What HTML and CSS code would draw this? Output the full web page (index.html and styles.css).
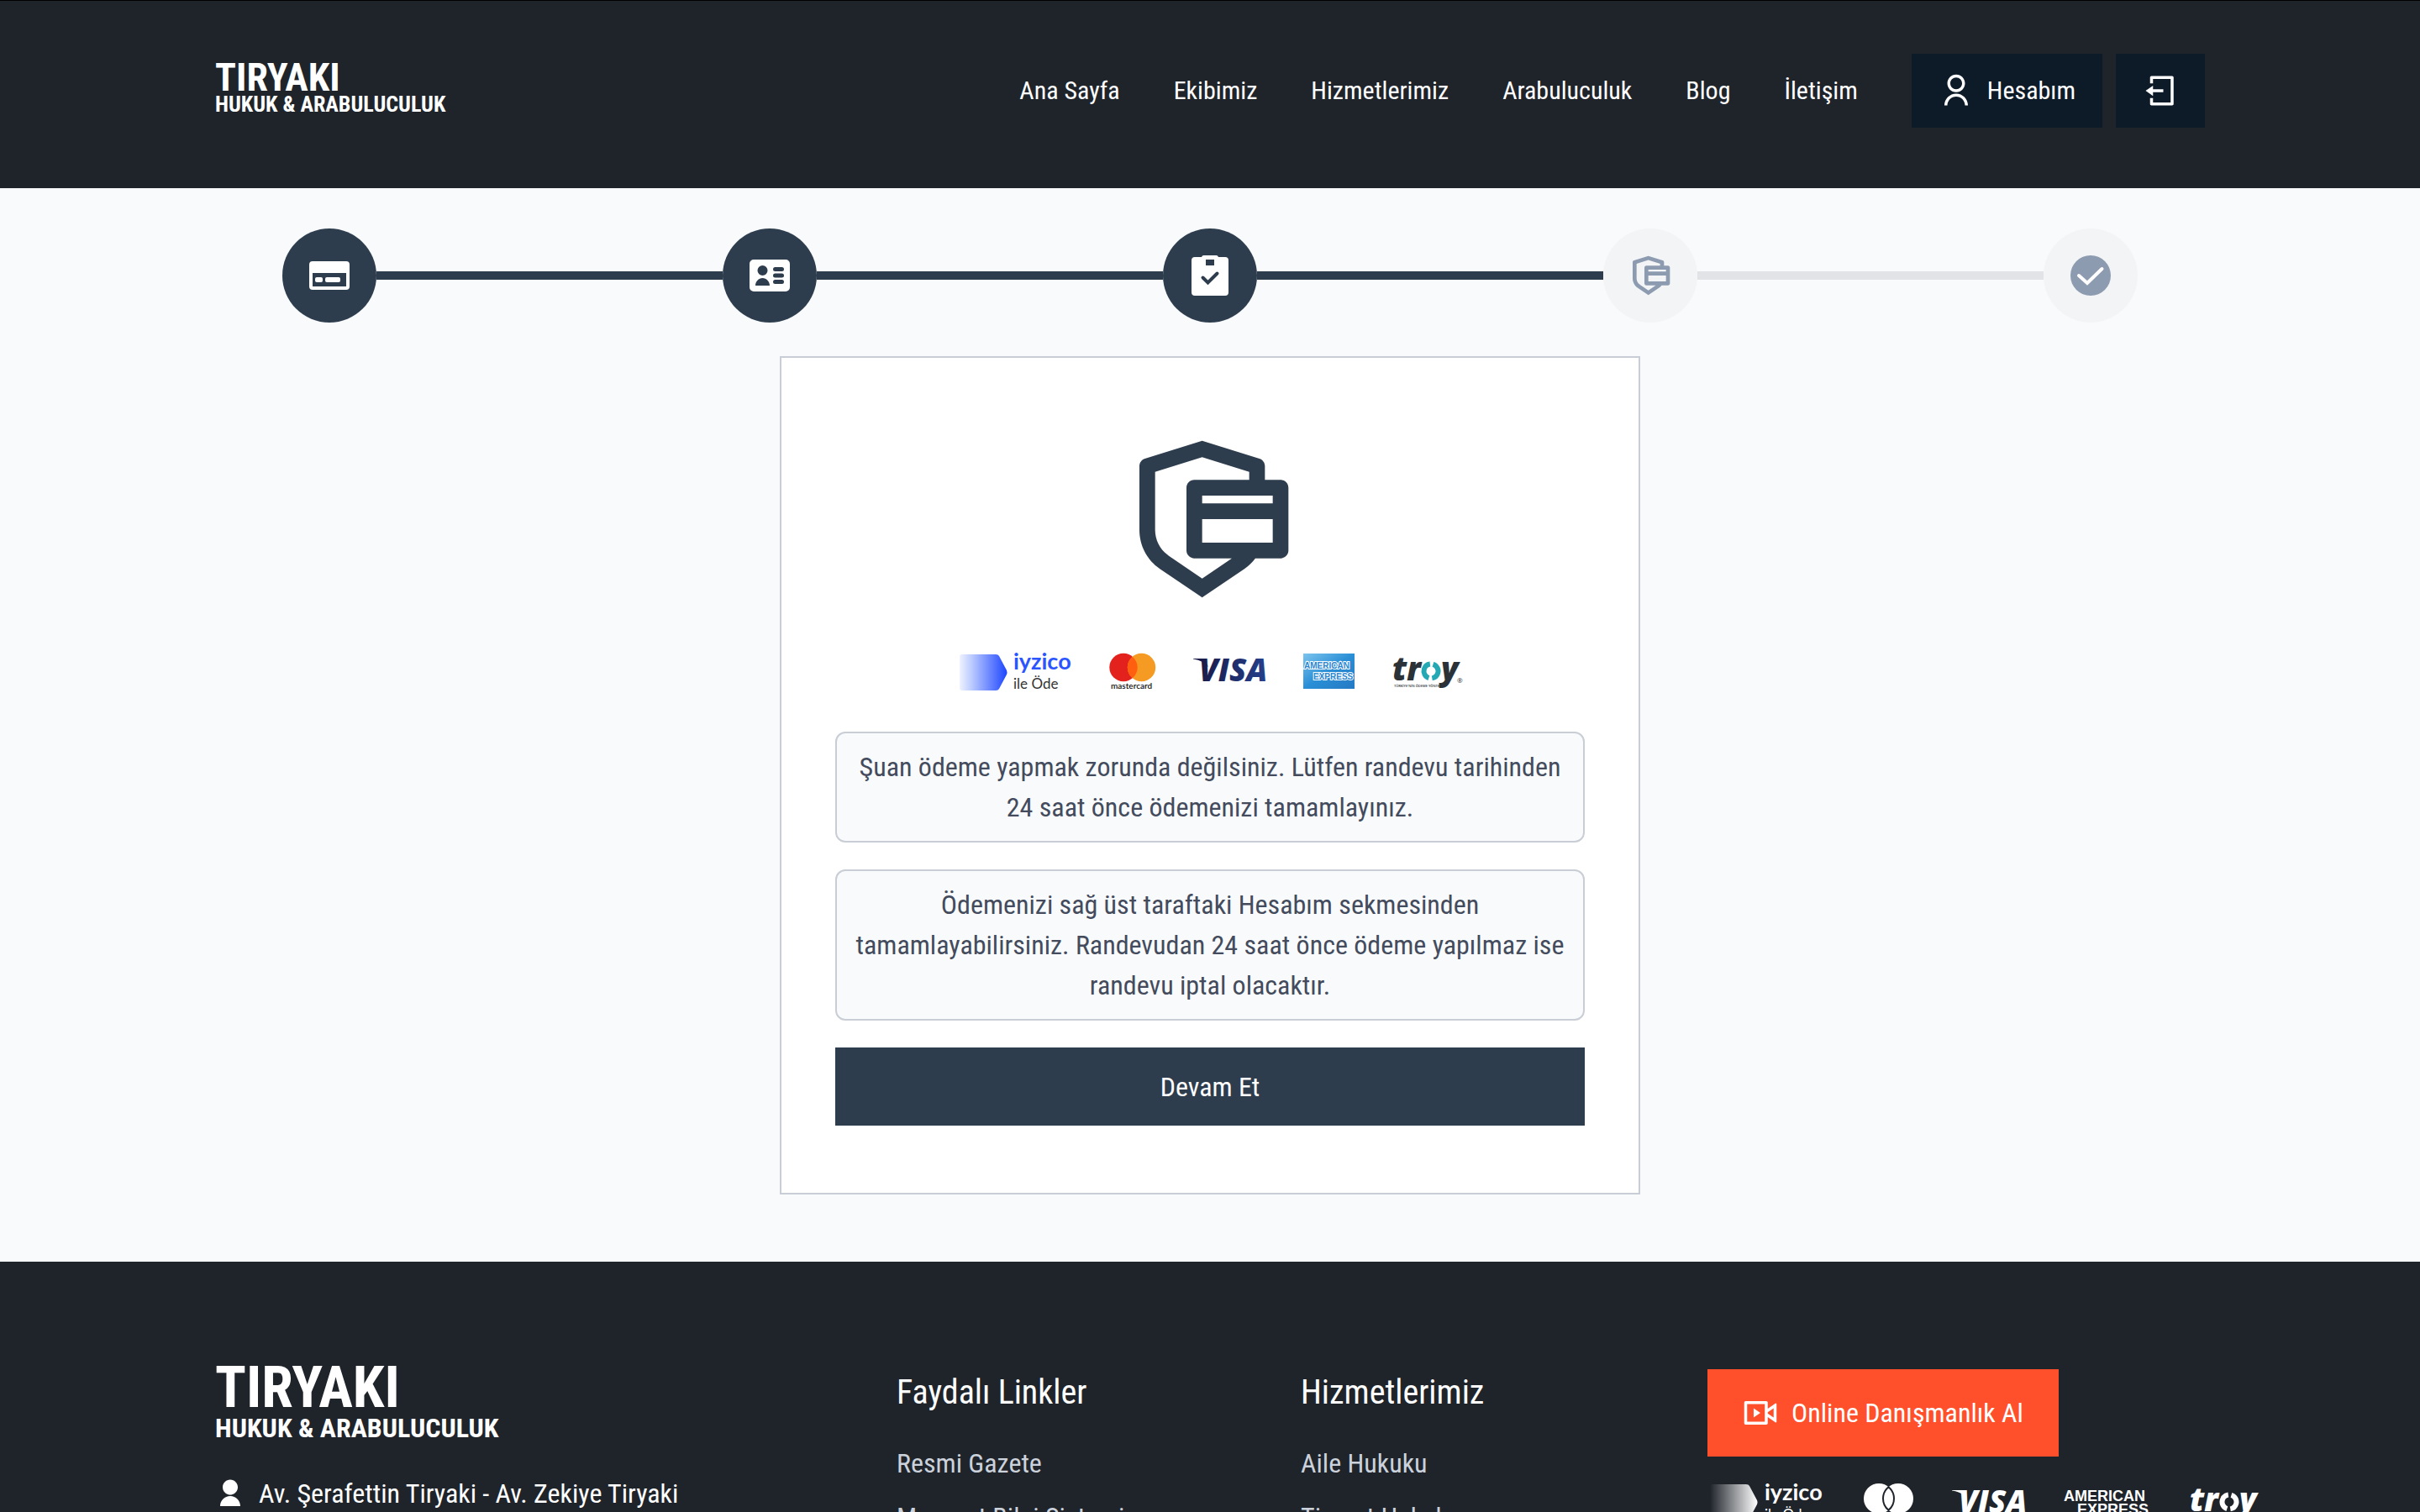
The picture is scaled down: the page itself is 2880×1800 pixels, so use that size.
FILE: index.html
```html
<!DOCTYPE html>
<html lang="tr">
<head>
<meta charset="utf-8">
<meta name="viewport" content="width=device-width, initial-scale=1">
<title>Tiryaki Hukuk &amp; Arabuluculuk</title>
<link rel="stylesheet" href="styles.css">
</head>
<body>
<div class="page">
  <header class="header">
    <div class="container header-inner">
      <a class="logo" href="#">
        <span class="logo-name">TIRYAKI</span>
        <span class="logo-sub">HUKUK &amp; ARABULUCULUK</span>
      </a>
      <nav class="nav">
        <a href="#">Ana Sayfa</a>
        <a href="#">Ekibimiz</a>
        <a href="#">Hizmetlerimiz</a>
        <a href="#">Arabuluculuk</a>
        <a href="#">Blog</a>
        <a href="#">İletişim</a>
        <div class="account">
          <button class="account-button" type="button">
            <svg class="icon" viewBox="0 0 24 24" aria-hidden="true"><path d="M4 22C4 17.582 7.582 14 12 14S20 17.582 20 22H18C18 18.686 15.314 16 12 16S6 18.686 6 22H4ZM12 13C8.685 13 6 10.315 6 7S8.685 1 12 1S18 3.685 18 7S15.315 13 12 13ZM12 11C14.21 11 16 9.21 16 7S14.21 3 12 3S8 4.79 8 7S9.79 11 12 11Z"/></svg>
            Hesabım
          </button>
          <button class="account-button" type="button" aria-label="Çıkış">
            <svg class="icon" viewBox="-1 0 24 24" aria-hidden="true"><path d="M4 17H6V20H18V4H6V7H4V3C4 2.45 4.45 2 5 2H19C19.55 2 20 2.45 20 3V21C20 21.55 19.55 22 19 22H5C4.45 22 4 21.55 4 21V17ZM6 11H13V13H6V15.5L1 12L6 8.500V11Z"/></svg>
          </button>
        </div>
      </nav>
    </div>
  </header>

  <main class="main">
    <ol class="steps">
      <li class="step done">
        <svg class="step-icon" viewBox="0 0 48 48" aria-label="Ödeme türü"><path fill-rule="evenodd" d="M4 7H44a4 4 0 0 1 4 4V37a4 4 0 0 1-4 4H4a4 4 0 0 1-4-4V11a4 4 0 0 1 4-4ZM4 21V37H44V21Z"/><rect x="7" y="26" width="9" height="6" rx="2"/><rect x="19" y="26" width="18" height="6" rx="2"/></svg>
      </li>
      <li class="bar done"></li>
      <li class="step done">
        <svg class="step-icon" viewBox="0 0 48 48" aria-label="Bilgiler"><path fill-rule="evenodd" d="M5 5H43a5 5 0 0 1 5 5V38a5 5 0 0 1-5 5H5a5 5 0 0 1-5-5V10a5 5 0 0 1 5-5ZM15.500 12a6 6 0 1 0 0 12a6 6 0 0 0 0-12ZM7 36H24C24 31 20 27 15.500 27S7 31 7 36ZM30.500 14a2 2 0 0 0 0 5H38.500a2 2 0 0 0 0-5ZM30.500 21.500a2 2 0 0 0 0 5H38.500a2 2 0 0 0 0-5ZM30.500 29a2 2 0 0 0 0 5H38.500a2 2 0 0 0 0-5Z"/></svg>
      </li>
      <li class="bar done"></li>
      <li class="step done">
        <svg class="step-icon" viewBox="0 0 48 48" aria-label="Onay"><path fill-rule="evenodd" d="M6 2H14a3 3 0 0 1 3-2H31a3 3 0 0 1 3 2H42a4 4 0 0 1 4 4V44a4 4 0 0 1-4 4H6a4 4 0 0 1-4-4V6a4 4 0 0 1 4-4ZM19 5V12H29V5Z"/><path class="mark" d="M15.500 26.500L21.500 32.500L32.500 21.500"/></svg>
      </li>
      <li class="bar done"></li>
      <li class="step">
        <svg class="step-icon large" viewBox="0 0 24 24" aria-label="Güvenli ödeme"><use href="#secure-card"/></svg>
      </li>
      <li class="bar"></li>
      <li class="step">
        <svg class="step-icon" viewBox="0 0 48 48" aria-label="Tamamlandı"><circle cx="24" cy="24" r="24"/><path class="tick" d="M10 24L20 33L37.500 16"/></svg>
      </li>
    </ol>

    <section class="card">
      <svg class="secure" viewBox="0 0 24 24" aria-hidden="true">
        <path id="secure-card" fill-rule="evenodd" d="M11 2L18.298 4.281C18.715 4.411 19 4.798 19 5.235V7H21C21.552 7 22 7.448 22 8V16C22 16.552 21.552 17 21 17H17.780C17.390 17.510 16.920 17.970 16.390 18.340L11 22L5.610 18.340C3.970 17.230 3 15.370 3 13.370V5.235C3 4.798 3.285 4.411 3.702 4.281L11 2ZM11 4.094L5 5.970V13.370C5 14.620 5.580 15.790 6.560 16.540L6.750 16.680L11 19.580L14.780 17H10C9.448 17 9 16.552 9 16V8C9 7.448 9.448 7 10 7H17V5.970L11 4.094ZM11 12V15H20V12H11ZM11 9V10H20V9H11Z"/>
      </svg>

      <svg class="payments" viewBox="0 0 604 48" role="img" aria-label="Ödeme yöntemleri">
        <defs>
          <linearGradient id="iyzico-fill"><stop offset="0" stop-color="#eef2ff"/><stop offset=".25" stop-color="#bccbff"/><stop offset="1" stop-color="#1e46ff"/></linearGradient>
          <linearGradient id="visa-fill"><stop offset="0" stop-color="#1a1a48"/><stop offset="1" stop-color="#25408c"/></linearGradient>
          <linearGradient id="amex-fill" x2="1" y2="1"><stop offset="0" stop-color="#7cc4ee"/><stop offset=".5" stop-color="#2a8fd6"/><stop offset="1" stop-color="#2579c4"/></linearGradient>
        </defs>
        <path fill="url(#iyzico-fill)" d="M7 3H47Q50 3 51 5L60 22Q61 24.500 60 27L51 44Q50 46 47 46H7Q4 46 4 43V6Q4 3 7 3Z"/>
        <text class="iyzico" x="68" y="21">iyzico</text>
        <text class="ode" x="68" y="44">ile Öde</text>
        <circle cx="199" cy="18.500" r="16.700" fill="#e3211d"/>
        <circle cx="220.500" cy="18.500" r="16.700" fill="#f59a22"/>
        <path fill="#ff5f0f" d="M209.750 5.720a16.700 16.700 0 0 1 0 25.560a16.700 16.700 0 0 1 0-25.560Z"/>
        <text class="mastercard" x="184" y="44">mastercard</text>
        <path fill="#1a1a48" d="M282 8H295L300 18Q294 10 282 8.500Z"/>
        <text class="visa" x="289" y="35" fill="url(#visa-fill)">VISA</text>
        <rect x="413" y="2" width="61" height="42" fill="url(#amex-fill)"/>
        <text class="amex" x="414" y="20">AMERICAN</text>
        <text class="amex" x="425" y="33">EXPRESS</text>
        <text class="troy" x="519" y="34">tr</text>
        <circle class="ring" cx="565" cy="23" r="8.500" transform="rotate(-73 565 23)"/>
        <text class="troy" x="577" y="34">y</text>
        <text class="troy-note" x="521" y="42">TÜRKİYE'NİN ÖDEME YÖNTEMİ</text>
        <text class="reg" x="596" y="37">®</text>
      </svg>

      <p class="note">Şuan ödeme yapmak zorunda değilsiniz. Lütfen randevu tarihinden 24 saat önce ödemenizi tamamlayınız.</p>
      <p class="note">Ödemenizi sağ üst taraftaki Hesabım sekmesinden tamamlayabilirsiniz. Randevudan 24 saat önce ödeme yapılmaz ise randevu iptal olacaktır.</p>
      <button class="continue" type="button">Devam Et</button>
    </section>
  </main>

  <footer class="footer">
    <div class="container footer-inner">
      <div>
        <a class="logo footer-logo" href="#">
          <span class="logo-name">TIRYAKI</span>
          <span class="logo-sub">HUKUK &amp; ARABULUCULUK</span>
        </a>
        <p class="contact">
          <svg class="contact-icon" viewBox="0 0 24 24" aria-hidden="true"><path d="M4 22C4 17.582 7.582 14 12 14S20 17.582 20 22H4ZM12 13C8.685 13 6 10.315 6 7S8.685 1 12 1S18 3.685 18 7S15.315 13 12 13Z"/></svg>
          Av. Şerafettin Tiryaki - Av. Zekiye Tiryaki
        </p>
      </div>
      <div>
        <h2 class="footer-title">Faydalı Linkler</h2>
        <ul class="footer-links">
          <li><a href="#">Resmi Gazete</a></li>
          <li><a href="#">Mevzuat Bilgi Sistemi</a></li>
        </ul>
      </div>
      <div>
        <h2 class="footer-title">Hizmetlerimiz</h2>
        <ul class="footer-links">
          <li><a href="#">Aile Hukuku</a></li>
          <li><a href="#">Ticaret Hukuku</a></li>
        </ul>
      </div>
      <div>
        <button class="consult" type="button">
          <svg class="icon" viewBox="0 0 24 24" aria-hidden="true"><path fill-rule="evenodd" d="M16 4C16.552 4 17 4.448 17 5V9.200L22.213 5.550A.5.5 0 0 1 23 5.960V18.040A.5.5 0 0 1 22.213 18.450L17 14.800V19C17 19.552 16.552 20 16 20H2C1.448 20 1 19.552 1 19V5C1 4.448 1.448 4 2 4H16ZM15 6H3V18H15V6ZM7.400 8.800L12 12L7.400 15.200ZM21 8.840L17 11.640V12.360L21 15.160V8.840Z"/></svg>
          Online Danışmanlık Al
        </button>
        <svg class="payments white" viewBox="0 0 664 48" role="img" aria-label="Ödeme yöntemleri">
          <defs>
            <linearGradient id="iyzico-white"><stop offset="0" stop-color="#fff" stop-opacity="0"/><stop offset="1" stop-color="#fff"/></linearGradient>
          </defs>
          <path fill="url(#iyzico-white)" d="M6 3H46Q49 3 50 5L59 22Q60 24.500 59 27L50 44Q49 46 46 46H6Q3 46 3 43V6Q3 3 6 3Z"/>
          <text class="iyzico" x="68" y="22">iyzico</text>
          <text class="ode" x="68" y="45">ile Öde</text>
          <circle cx="204" cy="20" r="18"/>
          <circle cx="227" cy="20" r="18"/>
          <path class="overlap" d="M215.500 6.150a18 18 0 0 1 0 27.700a18 18 0 0 1 0-27.700Z"/>
          <path d="M291 10H304L309 20Q303 12 291 10.500Z"/>
          <text class="visa" x="299" y="37">VISA</text>
          <text class="amex" x="424" y="23">AMERICAN</text>
          <text class="amex" x="440" y="39">EXPRESS</text>
          <text class="troy" x="574" y="35">tr</text>
          <circle class="ring" cx="621" cy="24" r="8.500" transform="rotate(-73 621 24)"/>
          <text class="troy" x="633" y="35">y</text>
        </svg>
      </div>
    </div>
  </footer>
</div>
</body>
</html>
```
FILE: styles.css
```css
*, *::before, *::after {
  box-sizing: border-box;
}

body {
  margin: 0;
  font-family: "Roboto Condensed", Roboto, sans-serif;
  font-size: 32px;
  line-height: 48px;
  color: #434b5c;
  background: #f8fafc;
}

a {
  color: inherit;
  text-decoration: none;
}

button {
  border: 0;
  padding: 0;
  font: inherit;
  color: #fff;
  cursor: pointer;
}

h2, p, ol, ul {
  margin: 0;
  padding: 0;
  list-style: none;
}

svg {
  display: block;
  fill: currentColor;
}

.page {
  height: 100vh;
  overflow: hidden;
}

.container {
  max-width: 2368px;
  margin: 0 auto;
}

/* Header */

.header {
  padding: 63px 0 72px;
  border-top: 1px solid #000;
  background: #1f242b;
  color: #fff;
}

.header-inner {
  display: flex;
  align-items: center;
  justify-content: space-between;
}

.logo {
  display: flex;
  flex-direction: column;
  padding-bottom: 4px;
  font-weight: 700;
  white-space: nowrap;
}

.logo-name {
  font-size: 46px;
  line-height: 36px;
}

.logo-sub {
  font-size: 26px;
  line-height: 28px;
}

.nav {
  display: flex;
  align-items: center;
  gap: 64px;
  font-size: 30px;
}

.account {
  display: flex;
  gap: 16px;
}

.account-button {
  display: flex;
  align-items: center;
  gap: 16px;
  height: 88px;
  padding: 0 32px;
  background: #0d1b29;
}

.icon {
  width: 42px;
  height: 42px;
}

/* Progress steps */

.main {
  padding: 48px 0 80px;
}

.steps {
  display: flex;
  align-items: center;
  max-width: 2208px;
  margin: 0 auto 40px;
}

.step {
  display: grid;
  place-items: center;
  width: 112px;
  height: 112px;
  border-radius: 50%;
  background: #f3f4f6;
  color: #8d9bb0;
}

.step.done {
  background: #2e3d4d;
  color: #fff;
}

.bar {
  flex: 1;
  height: 10px;
  background: #e1e3e7;
}

.bar.done {
  background: #2e3d4d;
}

.step-icon {
  width: 48px;
  height: 48px;
}

.step-icon.large {
  width: 56px;
  height: 56px;
}

.mark, .tick {
  fill: none;
  stroke: #2e3d4d;
  stroke-width: 4;
  stroke-linecap: round;
}

.tick {
  stroke: #fff;
}

/* Payment card */

.card {
  display: flex;
  flex-direction: column;
  max-width: 1024px;
  margin: 0 auto;
  padding: 80px 64px;
  border: 2px solid #c9ced6;
  background: #fff;
  text-align: center;
}

.secure {
  width: 224px;
  height: 224px;
  margin: 0 auto;
  color: #2e3d4d;
}

.payments {
  width: 604px;
  height: 48px;
  margin: 46px auto 47px;
  overflow: visible;
}

.iyzico {
  font: 700 27px Lato, sans-serif;
  fill: #2b55ff;
}

.ode {
  font: 400 17px Lato, sans-serif;
  fill: #333;
}

.mastercard {
  font: 600 10px Lato, sans-serif;
  fill: #111;
}

.visa {
  font: italic 800 37px "Open Sans", sans-serif;
}

.amex {
  font: 700 10px "Liberation Sans", sans-serif;
  fill: #2a85cf;
  stroke: #fff;
  stroke-width: 2;
  paint-order: stroke;
}

.troy {
  font: italic 800 38px "Open Sans", sans-serif;
  fill: #2a3238;
}

.troy-note {
  font: 600 4px "Open Sans", sans-serif;
  fill: #2a3238;
}

.reg {
  font: 400 8px "Open Sans", sans-serif;
  fill: #2a3238;
}

.ring {
  fill: none;
  stroke: #23a8b4;
  stroke-width: 6;
  stroke-dasharray: 22.7 4;
}

.note {
  margin-bottom: 32px;
  padding: 16px;
  border: 2px solid #c9ced6;
  border-radius: 12px;
  background: #f8fafc;
}

.continue {
  height: 93px;
  background: #2e3d4d;
}

/* Footer */

.footer {
  padding: 128px 0;
  background: #1f242b;
  color: #fff;
}

.footer-inner {
  display: grid;
  grid-template-columns: 811fr 481fr 484fr 592fr;
}

.footer-inner > div {
  min-width: 0;
}

.footer-logo {
  padding-bottom: 28px;
}

.footer-logo .logo-name {
  font-size: 68px;
  line-height: 44px;
}

.footer-logo .logo-sub {
  font-size: 32px;
  line-height: 52px;
}

.contact {
  display: flex;
  align-items: center;
  gap: 16px;
}

.contact-icon {
  width: 36px;
  height: 36px;
}

.footer-title {
  margin-bottom: 32px;
  font-size: 40px;
  font-weight: 400;
  line-height: 56px;
}

.footer-links {
  display: grid;
  gap: 16px;
  color: #cbd2db;
}

.consult {
  display: flex;
  align-items: center;
  gap: 16px;
  height: 104px;
  padding: 0 42px;
  background: #ff4f2b;
  white-space: nowrap;
}

.payments.white {
  width: 664px;
  margin: 30px 0;
}

.white text {
  fill: #fff;
}

.white .amex {
  font-size: 18px;
  stroke: none;
}

.white .ring {
  stroke: #fff;
}

.white .overlap {
  stroke: #1f242b;
  stroke-width: 2;
}
```
